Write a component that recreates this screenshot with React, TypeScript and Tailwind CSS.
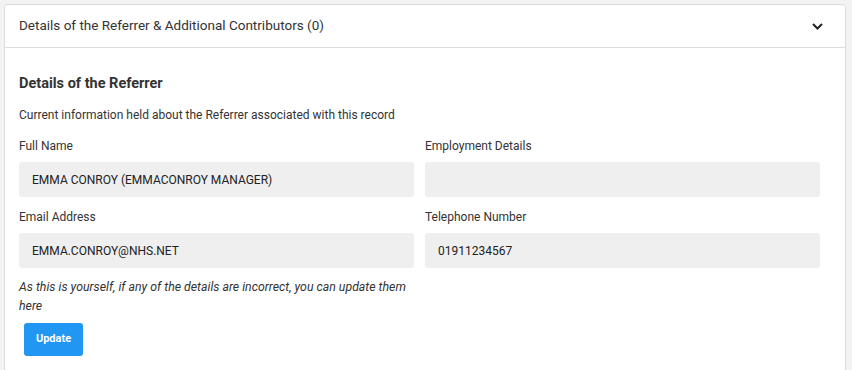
import React from 'react';

const Field: React.FC<{ label: string; value?: string }> = ({ label, value }) => (
  <div className="flex flex-col">
    <label className="text-[12px] leading-[14px] text-[#333] h-[14px] mb-[9px]">{label}</label>
    <div className="h-[35px] rounded-[3px] bg-[#efefef] px-[13px] flex items-center text-[12px] text-[#222] uppercase">
      {value}
    </div>
  </div>
);

const App: React.FC = () => {
  return (
    <div className="min-h-[370px] bg-[#f3f3f3] pt-[4px] pl-[4px] pr-[6px] font-['Roboto',sans-serif]">
      <div className="bg-white border border-[#dcdcdc] rounded-[3px] min-h-[370px]">
        {/* Header */}
        <div className="h-[43px] flex items-center justify-between pl-[14px] pr-[22px] border-b border-[#dcdcdc]">
          <span className="text-[13.5px] text-[#333] -mt-[1px]">Details of the Referrer &amp; Additional Contributors (0)</span>
          <svg width="11" height="7" viewBox="0 0 11 7" fill="none">
            <path d="M1 1l4.5 4.5L10 1" stroke="#222" strokeWidth="2" />
          </svg>
        </div>

        {/* Body */}
        <div className="pl-[14px] pt-[26px]">
          <h3 className="text-[14.5px] leading-[20px] font-bold text-[#333]">Details of the Referrer</h3>
          <p className="text-[12px] leading-[14px] text-[#333] mt-[14px]">
            Current information held about the Referrer associated with this record
          </p>
          <div className="grid grid-cols-[395px_395px] gap-x-[11px] gap-y-[13px] mt-[17px]">
            <Field label="Full Name" value="EMMA CONROY (EMMACONROY MANAGER)" />
            <Field label="Employment Details" />
            <Field label="Email Address" value="EMMA.CONROY@NHS.NET" />
            <Field label="Telephone Number" value="01911234567" />
          </div>
          <p className="w-[395px] text-[12.3px] leading-[19px] italic text-[#333] mt-[10px]">
            As this is yourself, if any of the details are incorrect, you can update them here
          </p>
          <button className="ml-[5px] mt-[7px] w-[59px] h-[33px] rounded-[3px] bg-[#2196f3] text-white text-[11px] font-bold">
            Update
          </button>
        </div>
      </div>
    </div>
  );
};

export default App;
